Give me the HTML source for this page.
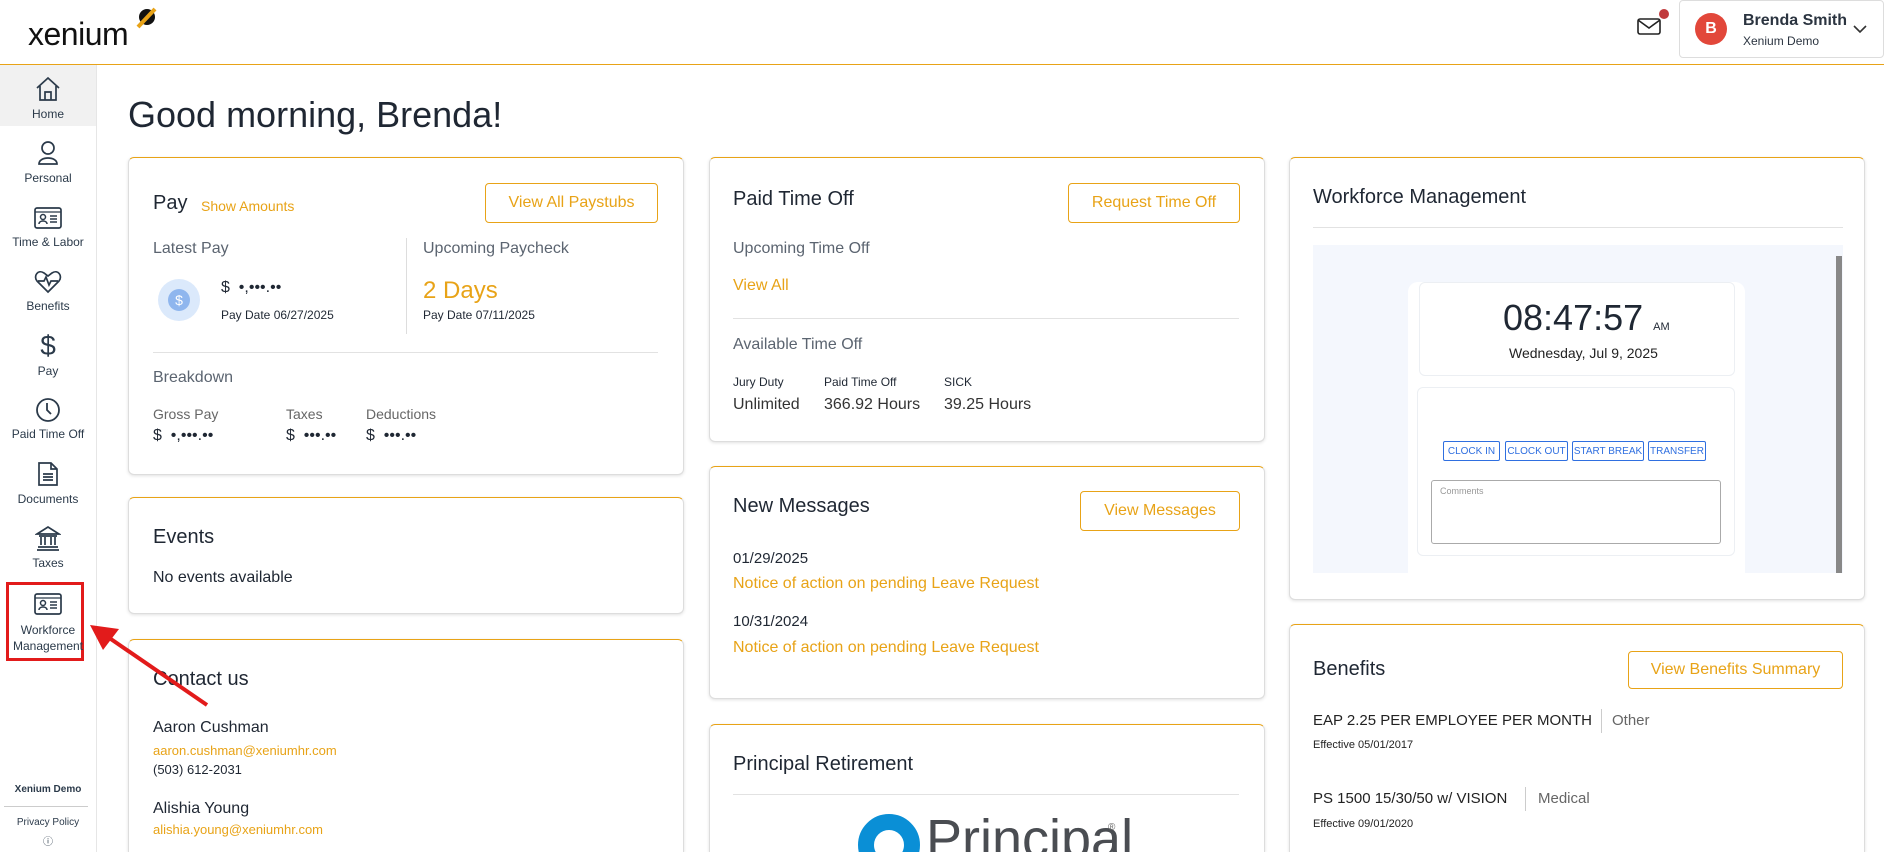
<!DOCTYPE html>
<html><head><meta charset="utf-8"><style>
*{box-sizing:border-box;margin:0;padding:0}
html,body{width:1884px;height:852px;overflow:hidden}
body{background:#fff;font-family:"Liberation Sans",sans-serif;color:#1f2733;position:relative}
#w{position:relative;width:1884px;height:852px;overflow:hidden}
.a{position:absolute;white-space:nowrap}
.card{position:absolute;border:1px solid #ddd;border-top:1px solid #e8a317;border-radius:6px;background:#fff;box-shadow:0 1px 3px rgba(0,0,0,.12)}
.cut{border-bottom:none;border-radius:6px 6px 0 0}
.t{font-size:20px;color:#1f2733}
.g{color:#e8a317}
.lbl{color:#5b6470;font-size:16px}
.btn{position:absolute;border:1px solid #e8a317;border-radius:4px;color:#e8a317;font-size:16px;display:flex;align-items:center;justify-content:center;background:#fff}
.side{position:absolute;left:0;width:96px;text-align:center;font-size:12px;color:#2b3a4a}
.side svg{display:block;margin:0 auto}
.hr{position:absolute;height:1px;background:#e2e2e2}
.wb{position:absolute;border:1px solid #2f6fe0;border-radius:2px;color:#2f6fe0;font-size:10px;display:flex;align-items:center;justify-content:center;background:#fff}
</style></head><body><div id="w">
<div class="a" style="left:28px;top:16px;font-size:32px;color:#111;letter-spacing:-0.5px">xenium</div>
<svg class="a" style="left:135px;top:7px" width="22" height="22" viewBox="0 0 22 22"><circle cx="12" cy="10" r="8" fill="#111"/><path d="M3 20 L20 2" stroke="#e8a317" stroke-width="4"/></svg>
<div class="a" style="left:0;top:64px;width:1884px;height:1px;background:#e8a317"></div>
<svg class="a" style="left:1637px;top:17px" width="26" height="20" viewBox="0 0 26 20"><rect x="1" y="2" width="22" height="15" rx="2" fill="none" stroke="#222" stroke-width="1.6"/><path d="M1 3 L12 11 L23 3" fill="none" stroke="#222" stroke-width="1.6"/></svg>
<div class="a" style="left:1659px;top:9px;width:10px;height:10px;border-radius:50%;background:#c0393b"></div>
<div class="a" style="left:1679px;top:0;width:205px;height:58px;border:1px solid #ddd;border-radius:4px"></div>
<div class="a" style="left:1695px;top:13px;width:32px;height:32px;border-radius:50%;background:#e2473a;color:#fff;font-weight:bold;font-size:16px;text-align:center;line-height:32px">B</div>
<div class="a" style="left:1743px;top:12px;font-size:16px;font-weight:bold;color:#2b3440">Brenda Smith</div>
<div class="a" style="left:1743px;top:34px;font-size:12px;color:#2b3440">Xenium Demo</div>
<svg class="a" style="left:1853px;top:25px" width="14" height="9" viewBox="0 0 14 9"><path d="M1 1 L7 7 L13 1" fill="none" stroke="#333" stroke-width="1.6"/></svg>
<div class="a" style="left:96px;top:65px;width:1px;height:787px;background:#e6e6e6"></div>
<div class="a" style="left:0;top:65px;width:96px;height:61px;background:#f1f1f1"></div>
<div class="side" style="top:76px"><svg width="28" height="26" viewBox="0 0 28 26"><path d="M3 12 L14 2 L25 12 M6 10 V24 H22 V10 M11 24 V16 H17 V24" fill="none" stroke="#2b3a4a" stroke-width="1.7"/></svg><div style="margin-top:5px">Home</div></div>
<div class="side" style="top:140px"><svg width="24" height="26" viewBox="0 0 24 26"><circle cx="12" cy="8" r="6" fill="none" stroke="#2b3a4a" stroke-width="1.7"/><path d="M3 24 C3 16 21 16 21 24 Z" fill="none" stroke="#2b3a4a" stroke-width="1.7"/></svg><div style="margin-top:5px">Personal</div></div>
<div class="side" style="top:206px"><svg width="28" height="24" viewBox="0 0 28 24"><rect x="1" y="2" width="26" height="20" rx="2" fill="none" stroke="#2b3a4a" stroke-width="1.7"/><path d="M1 6 H27" stroke="#2b3a4a" stroke-width="1.3"/><circle cx="9" cy="11" r="2.5" fill="none" stroke="#2b3a4a" stroke-width="1.5"/><path d="M5 18 C5 14 13 14 13 18 M16 10 H23 M16 13 H23 M16 16 H23" fill="none" stroke="#2b3a4a" stroke-width="1.5"/></svg><div style="margin-top:5px">Time &amp; Labor</div></div>
<div class="side" style="top:270px"><svg width="28" height="24" viewBox="0 0 28 24"><path d="M14 22 L3 11 C-1 6 4 -1 10 3 L14 6 L18 3 C24 -1 29 6 25 11 Z M4 11 H10 L12 7 L15 15 L17 11 H24" fill="none" stroke="#2b3a4a" stroke-width="1.7"/></svg><div style="margin-top:5px">Benefits</div></div>
<div class="side" style="top:332px"><div style="font-size:28px;line-height:28px;font-weight:300">$</div><div style="margin-top:4px">Pay</div></div>
<div class="side" style="top:397px"><svg width="26" height="26" viewBox="0 0 26 26"><circle cx="13" cy="13" r="11" fill="none" stroke="#2b3a4a" stroke-width="1.8"/><path d="M12 6 V13 L16 17" fill="none" stroke="#2b3a4a" stroke-width="1.8"/></svg><div style="margin-top:4px">Paid Time Off</div></div>
<div class="side" style="top:461px"><svg width="22" height="26" viewBox="0 0 22 26"><path d="M2 2 H14 L20 8 V24 H2 Z M14 2 V8 H20 M6 13 H16 M6 16 H16 M6 19 H16" fill="none" stroke="#2b3a4a" stroke-width="1.7"/></svg><div style="margin-top:5px">Documents</div></div>
<div class="side" style="top:525px"><svg width="26" height="26" viewBox="0 0 26 26"><path d="M2 9 L13 2 L24 9 Z M4 11 H22 M6 12 V20 M10 12 V20 M16 12 V20 M20 12 V20 M3 22 H23 M2 25 H24" fill="none" stroke="#2b3a4a" stroke-width="1.7"/></svg><div style="margin-top:5px">Taxes</div></div>
<div class="a" style="left:6px;top:582px;width:78px;height:79px;border:3px solid #e21b1b"></div>
<div class="side" style="top:592px"><svg width="28" height="24" viewBox="0 0 28 24"><rect x="1" y="2" width="26" height="20" rx="2" fill="none" stroke="#2b3a4a" stroke-width="1.7"/><path d="M1 6 H27" stroke="#2b3a4a" stroke-width="1.3"/><circle cx="9" cy="11" r="2.5" fill="none" stroke="#2b3a4a" stroke-width="1.5"/><path d="M5 18 C5 14 13 14 13 18 M16 10 H23 M16 13 H23 M16 16 H23" fill="none" stroke="#2b3a4a" stroke-width="1.5"/></svg><div style="margin-top:6px;line-height:16px">Workforce<br>Management</div></div>
<div class="side" style="top:784px;font-size:10px;font-weight:bold">Xenium Demo</div>
<div class="a" style="left:4px;top:806px;width:84px;height:1px;background:#ccc"></div>
<div class="side" style="top:817px;font-size:10px">Privacy Policy</div>
<div class="side" style="top:837px;font-size:10px;line-height:12px">ⓘ</div>
<div class="a" style="left:128px;top:94px;font-size:36px;color:#1f2733">Good morning, Brenda!</div>
<!-- Pay -->
<div class="card" style="left:128px;top:157px;width:556px;height:318px"></div>
<div class="a t" style="left:153px;top:192px">Pay</div>
<div class="a g" style="left:201px;top:198px;font-size:14px">Show Amounts</div>
<div class="btn" style="left:485px;top:183px;width:173px;height:40px">View All Paystubs</div>
<div class="a lbl" style="left:153px;top:240px">Latest Pay</div>
<div class="a" style="left:406px;top:238px;width:1px;height:96px;background:#ddd"></div>
<div class="a" style="left:158px;top:279px;width:42px;height:42px;border-radius:50%;background:#dbe9fb"></div>
<div class="a" style="left:168px;top:289px;width:22px;height:22px;border-radius:50%;background:#8fb6ee;color:#fff;font-size:14px;text-align:center;line-height:22px">$</div>
<div class="a" style="left:221px;top:279px;font-size:16px">$ &nbsp;•,•••.••</div>
<div class="a" style="left:221px;top:308px;font-size:12px">Pay Date 06/27/2025</div>
<div class="a lbl" style="left:423px;top:240px">Upcoming Paycheck</div>
<div class="a g" style="left:423px;top:277px;font-size:24px">2 Days</div>
<div class="a" style="left:423px;top:308px;font-size:12px">Pay Date 07/11/2025</div>
<div class="hr" style="left:153px;top:352px;width:505px"></div>
<div class="a lbl" style="left:153px;top:369px">Breakdown</div>
<div class="a" style="left:153px;top:406px;font-size:14px;color:#666">Gross Pay</div>
<div class="a" style="left:286px;top:406px;font-size:14px;color:#666">Taxes</div>
<div class="a" style="left:366px;top:406px;font-size:14px;color:#666">Deductions</div>
<div class="a" style="left:153px;top:427px;font-size:16px">$ &nbsp;•,•••.••</div>
<div class="a" style="left:286px;top:427px;font-size:16px">$ &nbsp;•••.••</div>
<div class="a" style="left:366px;top:427px;font-size:16px">$ &nbsp;•••.••</div>
<!-- Events -->
<div class="card" style="left:128px;top:497px;width:556px;height:117px"></div>
<div class="a t" style="left:153px;top:526px">Events</div>
<div class="a" style="left:153px;top:569px;font-size:16px">No events available</div>
<!-- Contact -->
<div class="card cut" style="left:128px;top:639px;width:556px;height:213px"></div>
<div class="a t" style="left:153px;top:668px">Contact us</div>
<div class="a" style="left:153px;top:719px;font-size:16px">Aaron Cushman</div>
<div class="a g" style="left:153px;top:743px;font-size:13px">aaron.cushman@xeniumhr.com</div>
<div class="a" style="left:153px;top:762px;font-size:13px">(503) 612-2031</div>
<div class="a" style="left:153px;top:800px;font-size:16px">Alishia Young</div>
<div class="a g" style="left:153px;top:822px;font-size:13px">alishia.young@xeniumhr.com</div>
<!-- PTO -->
<div class="card" style="left:709px;top:157px;width:556px;height:285px"></div>
<div class="a t" style="left:733px;top:188px">Paid Time Off</div>
<div class="btn" style="left:1068px;top:183px;width:172px;height:40px">Request Time Off</div>
<div class="a lbl" style="left:733px;top:240px">Upcoming Time Off</div>
<div class="a g" style="left:733px;top:277px;font-size:16px">View All</div>
<div class="hr" style="left:733px;top:318px;width:506px"></div>
<div class="a lbl" style="left:733px;top:336px">Available Time Off</div>
<div class="a" style="left:733px;top:375px;font-size:12px">Jury Duty</div>
<div class="a" style="left:824px;top:375px;font-size:12px">Paid Time Off</div>
<div class="a" style="left:944px;top:375px;font-size:12px">SICK</div>
<div class="a" style="left:733px;top:396px;font-size:16px;color:#333">Unlimited</div>
<div class="a" style="left:824px;top:396px;font-size:16px;color:#333">366.92 Hours</div>
<div class="a" style="left:944px;top:396px;font-size:16px;color:#333">39.25 Hours</div>
<!-- Messages -->
<div class="card" style="left:709px;top:466px;width:556px;height:233px"></div>
<div class="a t" style="left:733px;top:495px">New Messages</div>
<div class="btn" style="left:1080px;top:491px;width:160px;height:40px">View Messages</div>
<div class="a" style="left:733px;top:550px;font-size:15px">01/29/2025</div>
<div class="a g" style="left:733px;top:575px;font-size:16px">Notice of action on pending Leave Request</div>
<div class="a" style="left:733px;top:613px;font-size:15px">10/31/2024</div>
<div class="a g" style="left:733px;top:639px;font-size:16px">Notice of action on pending Leave Request</div>
<!-- Principal -->
<div class="card cut" style="left:709px;top:724px;width:556px;height:128px"></div>
<div class="a t" style="left:733px;top:753px">Principal Retirement</div>
<div class="hr" style="left:733px;top:794px;width:506px"></div>
<div class="a" style="left:850px;top:800px;width:280px;height:52px;overflow:hidden">
<div class="a" style="left:8px;top:14px;width:62px;height:62px;border-radius:50%;border:16px solid #0a8fd6"></div>
<div class="a" style="left:76px;top:8px;font-size:54px;line-height:62px;color:#4a4d52">Principal</div>
<div class="a" style="left:258px;top:22px;font-size:10px;color:#666">®</div>
</div>
<!-- WFM -->
<div class="card" style="left:1289px;top:157px;width:576px;height:443px"></div>
<div class="a t" style="left:1313px;top:186px">Workforce Management</div>
<div class="hr" style="left:1313px;top:227px;width:530px"></div>
<div class="a" style="left:1313px;top:245px;width:530px;height:328px;background:#f4f7fd"></div>
<div class="a" style="left:1408px;top:282px;width:337px;height:291px;background:#fff;border-radius:10px 10px 0 0"></div>
<div class="a" style="left:1419px;top:282px;width:316px;height:94px;border:1px solid #eceff3;border-radius:6px"></div>
<div class="a" style="left:1503px;top:297px;font-size:36px;color:#1f2733">08:47:57 <span style="font-size:11px">AM</span></div>
<div class="a" style="left:1509px;top:345px;font-size:14px;color:#222">Wednesday, Jul 9, 2025</div>
<div class="a" style="left:1417px;top:387px;width:318px;height:169px;border:1px solid #eceff3;border-radius:6px"></div>
<div class="wb" style="left:1443px;top:441px;width:57px;height:20px">CLOCK IN</div>
<div class="wb" style="left:1505px;top:441px;width:63px;height:20px">CLOCK OUT</div>
<div class="wb" style="left:1572px;top:441px;width:72px;height:20px">START BREAK</div>
<div class="wb" style="left:1648px;top:441px;width:58px;height:20px">TRANSFER</div>
<div class="a" style="left:1431px;top:480px;width:290px;height:64px;border:1px solid #aaa;border-radius:3px;font-size:9px;color:#999;padding:5px 8px">Comments</div>
<div class="a" style="left:1836px;top:256px;width:6px;height:317px;background:#888"></div>
<!-- Benefits -->
<div class="card cut" style="left:1289px;top:624px;width:576px;height:228px"></div>
<div class="a t" style="left:1313px;top:658px">Benefits</div>
<div class="btn" style="left:1628px;top:651px;width:215px;height:38px">View Benefits Summary</div>
<div class="a" style="left:1313px;top:712px;font-size:15px;color:#222">EAP 2.25 PER EMPLOYEE PER MONTH</div>
<div class="a" style="left:1601px;top:709px;width:1px;height:24px;background:#ccc"></div>
<div class="a" style="left:1612px;top:712px;font-size:15px;color:#666">Other</div>
<div class="a" style="left:1313px;top:739px;font-size:11px;color:#222">Effective 05/01/2017</div>
<div class="a" style="left:1313px;top:790px;font-size:15px;color:#222">PS 1500 15/30/50 w/ VISION</div>
<div class="a" style="left:1525px;top:787px;width:1px;height:24px;background:#ccc"></div>
<div class="a" style="left:1538px;top:790px;font-size:15px;color:#666">Medical</div>
<div class="a" style="left:1313px;top:818px;font-size:11px;color:#222">Effective 09/01/2020</div>
<svg class="a" style="left:85px;top:620px;z-index:5" width="130" height="90" viewBox="0 0 130 90"><path d="M122 85 L20 15" stroke="#e21b1b" stroke-width="4"/><path d="M5 5 L34 9 L18 30 Z" fill="#e21b1b"/></svg>
</div></body></html>
